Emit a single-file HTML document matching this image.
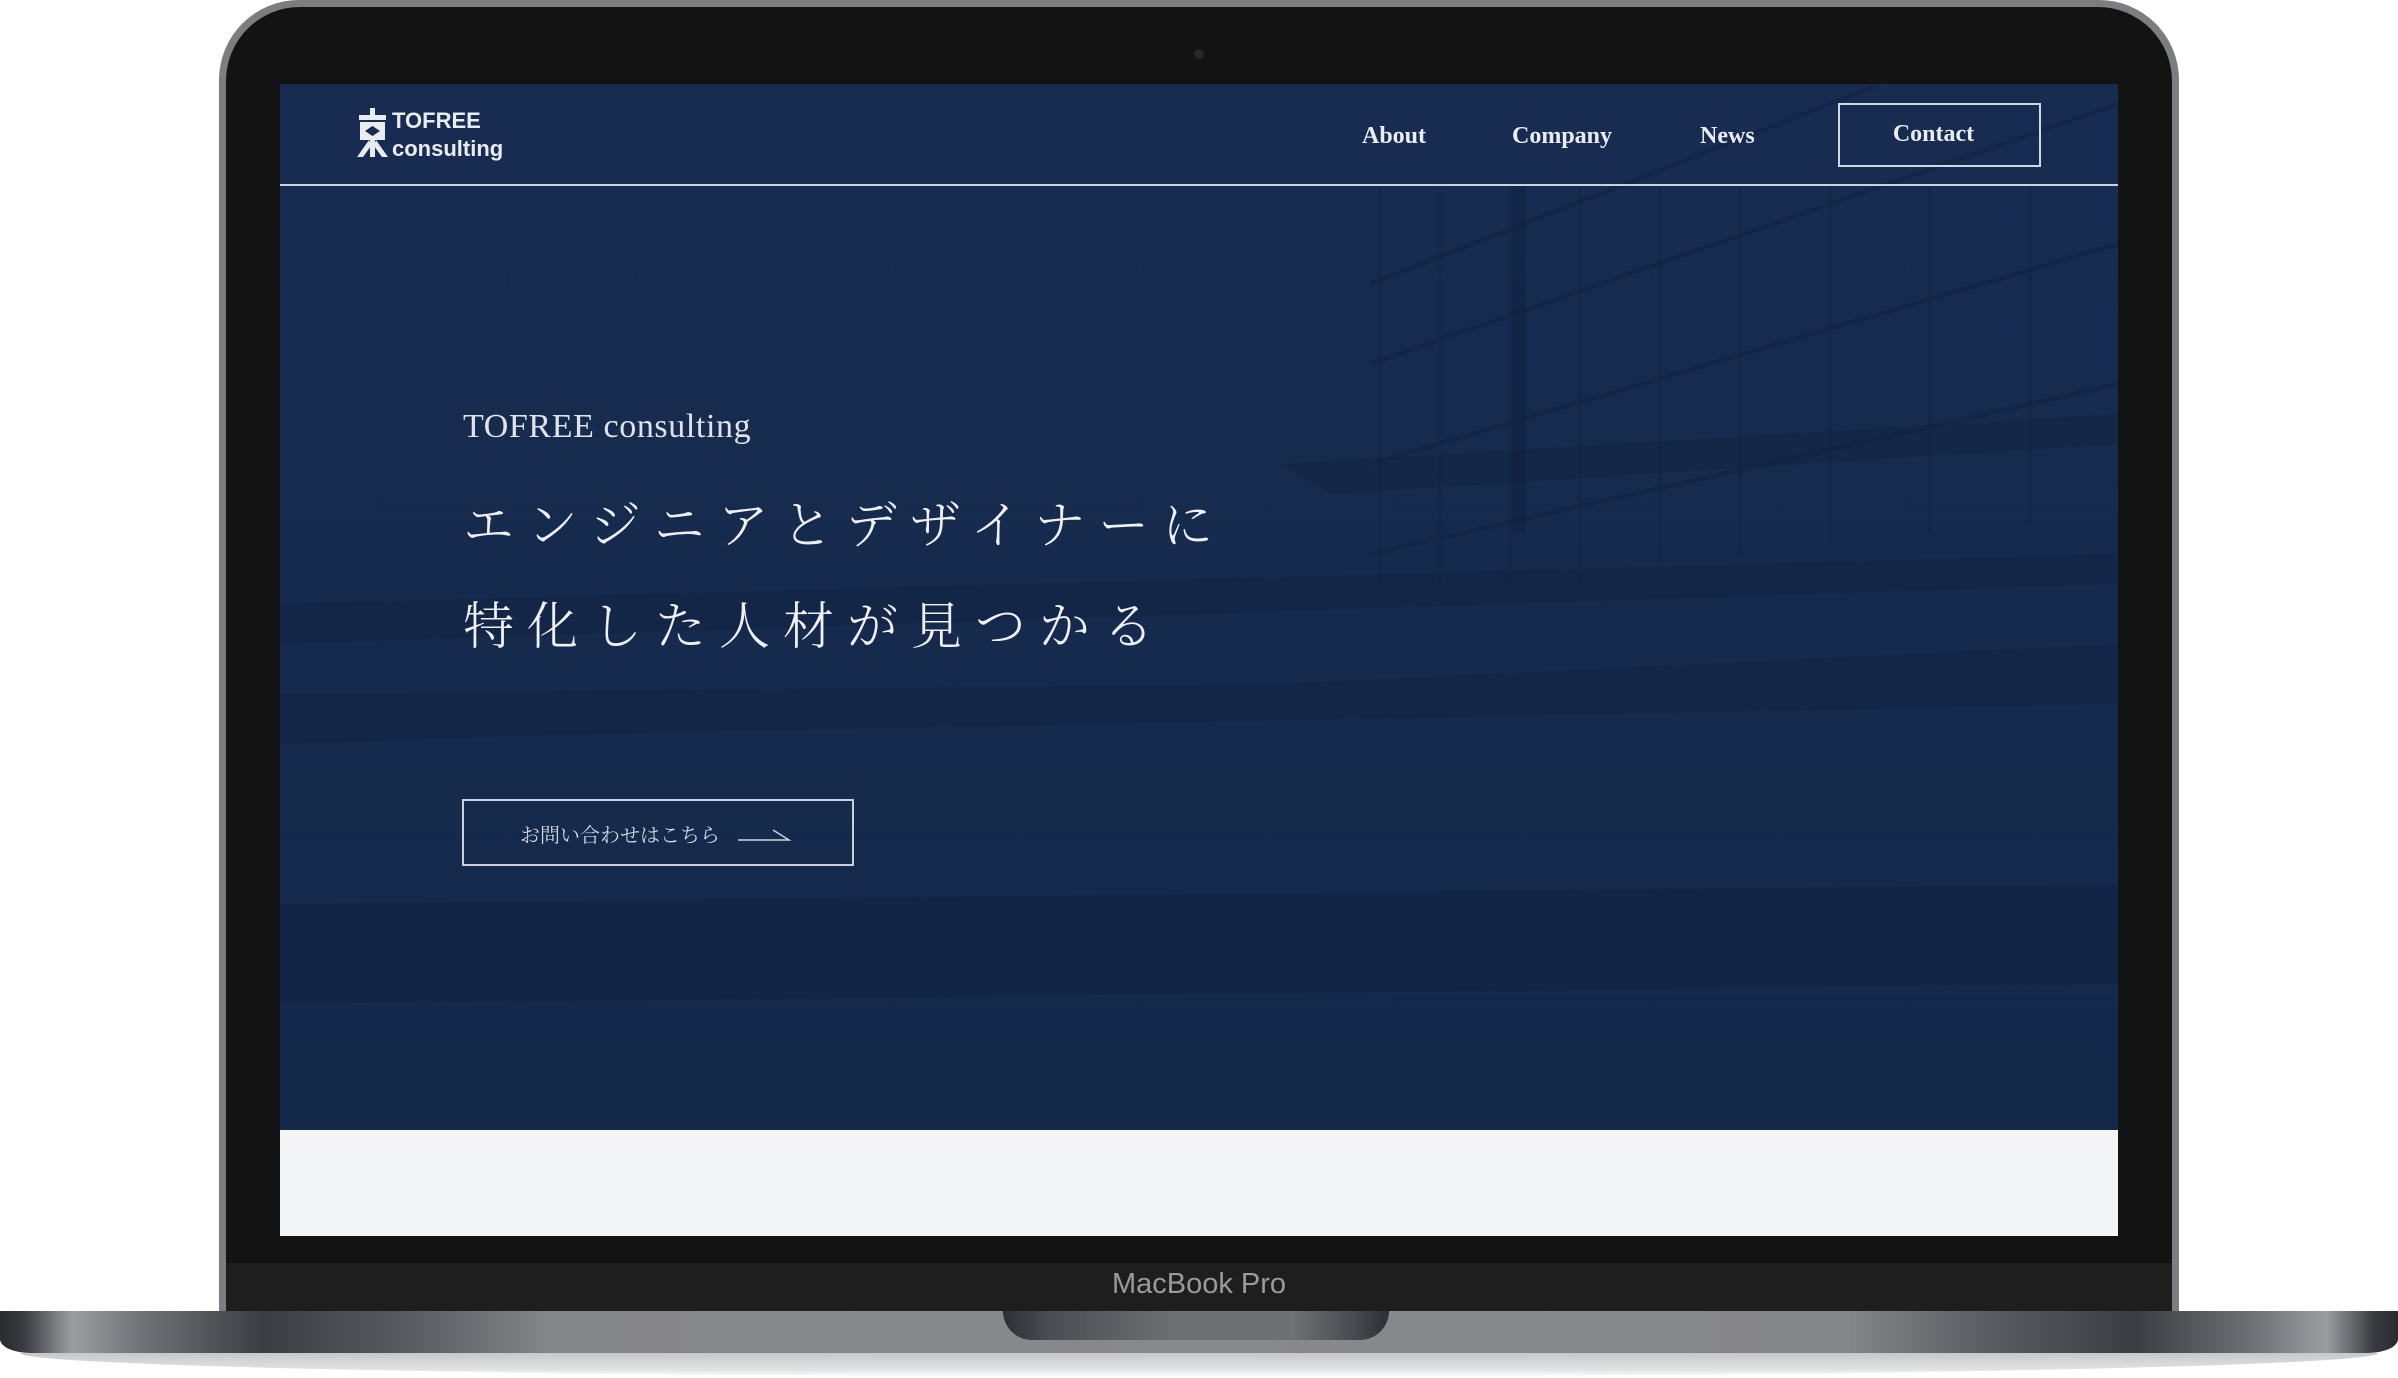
<!DOCTYPE html>
<html><head><meta charset="utf-8">
<style>
*{margin:0;padding:0;box-sizing:border-box}
body{width:2398px;height:1378px;background:#fff;position:relative;overflow:hidden;font-family:"Liberation Serif","Noto Serif CJK SC",serif}
.lid{position:absolute;left:219px;top:0;width:1960px;height:1320px;background:#7c7d81;border-radius:80px 80px 0 0}
.lidin{position:absolute;left:7px;top:7px;right:7px;bottom:0;background:#131313;border-radius:74px 74px 0 0}
.bez{position:absolute;left:226px;top:1263px;width:1946px;height:48px;background:#1e1e1e}
.mbp{position:absolute;left:0;width:2398px;top:1268px;text-align:center;font-family:"Liberation Sans",sans-serif;font-size:29px;color:#9a9a9c}
.cam{position:absolute;left:1194px;top:49px;width:10px;height:10px;border-radius:50%;background:#262626}
.screen{position:absolute;left:280px;top:84px;width:1838px;height:1152px;background:#f3f4f6;overflow:hidden}
.hero{position:absolute;left:0;top:0;width:1838px;height:1046px;background:linear-gradient(180deg,#172c50 0%,#162a4d 60%,#14284a 100%)}
.hdr{position:absolute;left:0;top:100px;width:1838px;height:2px;background:#c9d1de}
.logo{position:absolute;left:77px;top:22px;color:#e8ebf0;font-family:"Liberation Sans",sans-serif;font-weight:bold;font-size:22px;line-height:26px}
.nav{position:absolute;top:39px;color:#e8ebf0;font-weight:bold;font-size:24px}
.contact{position:absolute;left:1558px;top:19px;width:203px;height:64px;border:2px solid #d2d8e2;color:#e8ebf0;font-weight:bold;font-size:24px;text-align:center;line-height:58px;padding-right:12px}
.sub{position:absolute;left:183px;top:324px;color:#dfe3ea;font-size:34px;letter-spacing:0.6px}
.jp{position:absolute;left:183px;color:#eef0f4;font-size:51px;letter-spacing:13px;font-family:"Noto Serif CJK SC","Noto Sans CJK JP",serif;font-weight:300;white-space:nowrap}
.btn{position:absolute;left:182px;top:715px;width:392px;height:67px;border:2px solid #c9d0dc}
.btn span{position:absolute;left:56px;top:18px;color:#cfd5df;font-size:20px;font-family:"Noto Serif CJK SC",serif}
.base{position:absolute;left:0;top:1311px;width:2398px;height:42px;border-radius:0 0 30px 30px/0 0 14px 14px;background:linear-gradient(90deg,#2a2b30 0%,#3a3b40 1%,#9c9da1 3%,#707176 6%,#3c3d42 11%,#5a5b60 17%,#85868a 23%,#88898d 50%,#85868a 77%,#5a5b60 83%,#3c3d42 89%,#707176 94%,#9c9da1 97%,#3a3b40 99%,#2a2b30 100%)}
.shadow{position:absolute;left:20px;top:1353px;width:2358px;height:24px;background:linear-gradient(180deg,#c6c7ca,#e2e3e5 70%,#fff);border-radius:0 0 50% 50%/0 0 100% 100%}
.notch{position:absolute;left:1003px;top:1311px;width:386px;height:29px;border-radius:0 0 34px 34px;background:linear-gradient(90deg,#2c2f33,#4b4d52 12%,#6f7074 45%,#6f7074 75%,#4b4d52 90%,#2c2f33)}
</style></head><body>
<div class="lid"><div class="lidin"></div></div>
<div class="cam"></div>
<div class="bez"></div>
<div class="mbp">MacBook Pro</div>
<div class="screen">
 <div class="hero">
  <svg width="1838" height="1046" style="position:absolute;left:0;top:0">
   <g fill="#0f1f3c" opacity="0.35">
    <polygon points="0,520 1838,470 1838,500 0,560"/>
    <polygon points="0,610 1000,600 1838,560 1838,620 300,650 0,660"/>
    <polygon points="0,820 1838,800 1838,900 0,920"/>
    <polygon points="1000,380 1838,330 1838,360 1050,410"/>
   </g>
   <g stroke="#0f1f3c" stroke-width="5" opacity="0.35">
    <line x1="1090" y1="280" x2="1838" y2="20"/>
    <line x1="1090" y1="380" x2="1838" y2="160"/>
    <line x1="1090" y1="200" x2="1600" y2="0"/>
    <line x1="1090" y1="470" x2="1838" y2="300"/>
   </g>
   <g stroke="#0f1f3c" stroke-width="3" opacity="0.3">
    <line x1="1100" y1="100" x2="1100" y2="500"/><line x1="1160" y1="100" x2="1160" y2="500"/>
    <line x1="1230" y1="100" x2="1230" y2="500"/><line x1="1300" y1="100" x2="1300" y2="500"/>
    <line x1="1380" y1="100" x2="1380" y2="480"/><line x1="1460" y1="100" x2="1460" y2="470"/>
    <line x1="1550" y1="100" x2="1550" y2="460"/><line x1="1650" y1="100" x2="1650" y2="450"/>
    <line x1="1750" y1="100" x2="1750" y2="440"/>
   </g>
   <rect x="1232" y="100" width="14" height="350" fill="#0f1f3c" opacity="0.4"/>
  </svg>
  <div class="logo">
   <svg width="31" height="50" viewBox="0 0 31 50" style="position:absolute;left:0;top:2px">
    <g fill="#e8ebf0"><rect x="13" y="0" width="5" height="10"/><rect x="2" y="7" width="27" height="5"/><rect x="3" y="14" width="25" height="18"/><rect x="13" y="30" width="5" height="19"/><polygon points="12,32 0,49 6,49 14,38"/><polygon points="19,32 31,49 25,49 17,38"/></g>
    <polygon points="15.5,18 23,23 15.5,28 8,23" fill="#162a4e"/>
   </svg>
   <div style="position:absolute;left:35px;top:2px">TOFREE</div>
   <div style="position:absolute;left:35px;top:30px">consulting</div>
  </div>
  <div class="nav" style="left:1082px">About</div>
  <div class="nav" style="left:1232px">Company</div>
  <div class="nav" style="left:1420px">News</div>
  <div class="contact">Contact</div>
  <div class="hdr"></div>
  <div class="sub">TOFREE consulting</div>
  <div class="jp" style="top:400px">エンジニアとデザイナーに</div>
  <div class="jp" style="top:501px">特化した人材が見つかる</div>
  <div class="btn"><span>お問い合わせはこちら</span>
   <svg width="60" height="20" style="position:absolute;left:272px;top:22px"><path d="M2 17 H53 L37 7" fill="none" stroke="#cfd5df" stroke-width="1.5"/></svg>
  </div>
 </div>
</div>
<div class="shadow"></div>
<div class="base"></div>
<div class="notch"></div>
</body></html>
